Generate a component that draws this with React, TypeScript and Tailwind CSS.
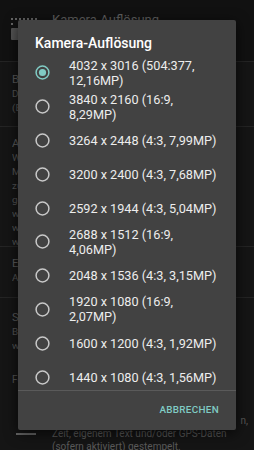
import React from "react";

const items: { l1: string; l2?: string; checked?: boolean }[] = [
  { l1: "4032 x 3016 (504:377,", l2: "12,16MP)", checked: true },
  { l1: "3840 x 2160 (16:9,", l2: "8,29MP)" },
  { l1: "3264 x 2448 (4:3, 7,99MP)" },
  { l1: "3200 x 2400 (4:3, 7,68MP)" },
  { l1: "2592 x 1944 (4:3, 5,04MP)" },
  { l1: "2688 x 1512 (16:9,", l2: "4,06MP)" },
  { l1: "2048 x 1536 (4:3, 3,15MP)" },
  { l1: "1920 x 1080 (16:9,", l2: "2,07MP)" },
  { l1: "1600 x 1200 (4:3, 1,92MP)" },
  { l1: "1440 x 1080 (4:3, 1,56MP)" },
];

function Radio({ checked }: { checked?: boolean }) {
  return (
    <svg width="15" height="15" viewBox="0 0 15 15">
      <circle
        cx="7.5"
        cy="7.5"
        r="6.4"
        fill="none"
        stroke={checked ? "#80cbc4" : "#c8c8c8"}
        strokeWidth="1.5"
      />
      {checked && <circle cx="7.5" cy="7.5" r="3.6" fill="#80cbc4" />}
    </svg>
  );
}

const bgTitle = "text-[#5a5a5a] text-[11.3px] leading-[14px] whitespace-nowrap overflow-hidden";
const bgText = "text-[#555555] text-[9.9px] leading-[14px] whitespace-nowrap overflow-hidden";

export default function App() {
  return (
    <div
      className="relative w-[254px] h-[450px] overflow-hidden bg-[#151515]"
      style={{ fontFamily: "Roboto, 'Noto Sans', sans-serif" }}
    >
      {/* background settings page */}
      <div className="flex flex-col w-[254px]">
        <div className="h-[62px] shrink-0 flex items-start border-b border-[#242424] bg-[#111111]">
          <div className="w-[52px] shrink-0 pl-[11px] pt-[18px] flex flex-col gap-[3px]">
            <div className="flex gap-[2px]">
              {[0, 1, 2, 3, 4, 5, 6].map((d) => (
                <div key={d} className="w-[2px] h-[2px] bg-[#666]" />
              ))}
            </div>
            <div className="w-[2px] h-[2px] bg-[#666]" />
            <div className="w-[8px] h-[12px] bg-[#555] rounded-[1px]" />
          </div>
          <div className="pt-[10px] text-[#5f5f5f] text-[13px]">Kamera-Auflösung</div>
        </div>
        <div className="h-[65px] shrink-0 border-b border-[#242424] pl-[12px] pt-[11px] pr-[20px]">
          <div className={bgTitle}>Bildgröße</div>
          <div className={bgText}>Die Auflösung der Fotos</div>
          <div className={bgText}>(Einstellung)</div>
        </div>
        <div className="h-[120px] shrink-0 border-b border-[#242424] pl-[12px] pt-[10px] pr-[20px]">
          <div className={bgTitle}>Auflösung</div>
          <div className={bgText}>Wählen Sie die Auflösung</div>
          <div className={bgText}>Maximale Größe</div>
          <div className={bgText}>zum Speichern</div>
          <div className={bgText}>gewählt wird</div>
          <div className={bgText}>wenn verfügbar</div>
          <div className={bgText}>wird verwendet</div>
          <div className={bgText}>wird benutzt</div>
        </div>
        <div className="h-[51px] shrink-0 border-b border-[#242424] pl-[12px] pt-[10px] pr-[20px]">
          <div className={bgTitle}>Einstellungen</div>
          <div className={bgText}>Automatisch</div>
        </div>
        <div className="h-[62px] shrink-0 pl-[12px] pt-[13px] pr-[20px]">
          <div className={bgTitle}>Stempel</div>
          <div className={bgText}>Bilder mit Datum</div>
          <div className={bgText}>werden gestempelt</div>
        </div>
        <div className="h-[40px] shrink-0 pl-[12px] pt-[13px]">
          <div className="text-[#555] text-[10px] leading-[13px]">Fotostempel</div>
        </div>
        <div className="flex">
          <div className="w-[52px] shrink-0 pl-[16px] pt-[33px]">
            <div className="w-[20px] h-[2px] bg-[#6a6a6a]" />
          </div>
          <div className="flex flex-col pt-[14px] w-[196px]">
            <div className="text-[#5a5a5a] text-[10px] leading-[13px] text-right whitespace-nowrap">n,</div>
            <div className="text-[#5a5a5a] text-[10px] leading-[13px] whitespace-nowrap">
              Zeit, eigenem Text und/oder GPS-Daten
            </div>
            <div className="text-[#5a5a5a] text-[10px] leading-[13px] whitespace-nowrap">
              (sofern aktiviert) gestempelt.
            </div>
          </div>
        </div>
      </div>

      {/* dialog */}
      <div className="absolute left-[18px] top-[20px] w-[218px] h-[410px] bg-[#424242] rounded-[2px] shadow-[0_3px_14px_rgba(0,0,0,0.7)] flex flex-col">
        <div className="h-[36px] shrink-0 pl-[17px] pt-[13px] text-white text-[14px] leading-[20px] font-medium">
          Kamera-Auflösung
        </div>
        <div className="h-[334px] shrink-0 overflow-hidden flex flex-col">
          {items.map((it, i) => (
            <div key={i} className="h-[33.8px] shrink-0 flex items-center">
              <div className="w-[51px] shrink-0 pl-[17px] flex items-center">
                <Radio checked={it.checked} />
              </div>
              <div className="text-[#ededed] text-[12.7px] leading-[15px] whitespace-nowrap">
                <div>{it.l1}</div>
                {it.l2 && <div>{it.l2}</div>}
              </div>
            </div>
          ))}
        </div>
        <div className="border-t border-[#5a5a5a] flex-1 flex items-center justify-end pr-[17px] pb-[1px]">
          <span className="text-[#80cbc4] text-[9.9px] font-medium tracking-[0.3px]">ABBRECHEN</span>
        </div>
      </div>
    </div>
  );
}
